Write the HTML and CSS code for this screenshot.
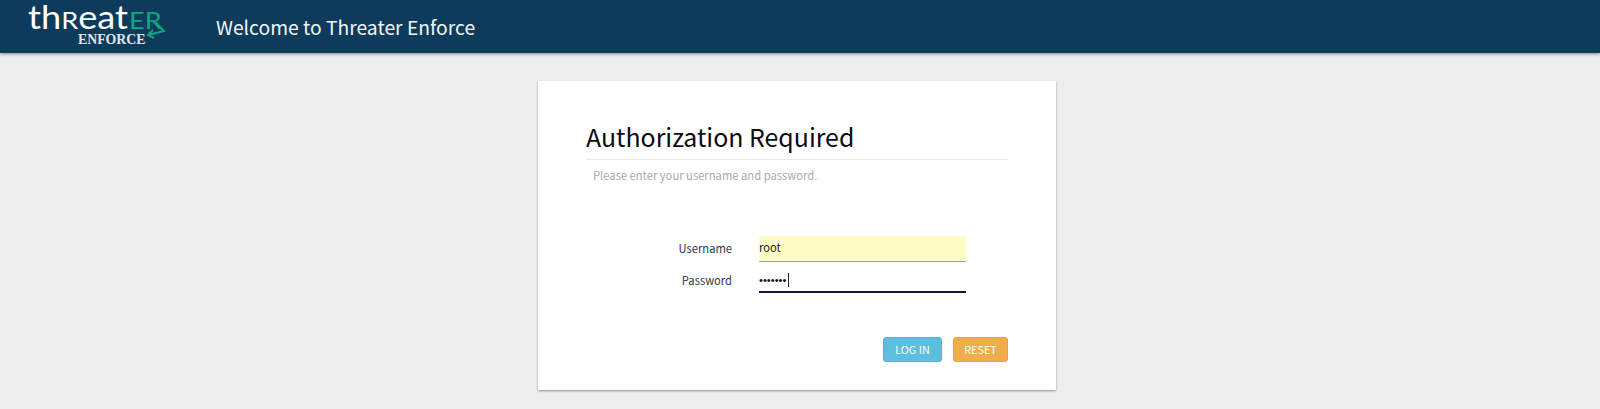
FILE: index.html
```html
<!DOCTYPE html>
<html lang="en">
<head>
<meta charset="utf-8">
<title>Welcome to Threater Enforce</title>
<link rel="stylesheet" href="styles.css">
</head>
<body>
<header class="topbar">
  <div class="logo">
    <div class="logo-word"><span class="logo-white">th<span class="logo-r">R</span>eat</span><span class="logo-green">ER</span></div>
    <div class="logo-sub">ENFORCE</div>
    <svg class="logo-arrow" width="140" height="46" viewBox="0 0 140 46" aria-hidden="true">
      <path d="M127 21L136 30L120 34M125 29L120 34L126 37" fill="none" stroke="#10a583" stroke-width="2"/>
    </svg>
  </div>
  <h1 class="topbar-title">Welcome to Threater Enforce</h1>
</header>
<main class="page">
  <section class="card">
    <h2 class="card-title">Authorization Required</h2>
    <p class="card-sub">Please enter your username and password.</p>
    <form class="login-form">
      <div class="field">
        <label class="field-label">Username</label>
        <div class="field-input filled">root</div>
      </div>
      <div class="field">
        <label class="field-label">Password</label>
        <div class="field-input focused"><span class="dots">•••••••</span><span class="caret"></span></div>
      </div>
      <div class="actions">
        <button type="button" class="btn btn-login">LOG IN</button>
        <button type="button" class="btn btn-reset">RESET</button>
      </div>
    </form>
  </section>
</main>
</body>
</html>
```
FILE: styles.css
```css
* { box-sizing: border-box; }
html, body { margin: 0; height: 100%; }
body {
  background: #eeeeee;
  font-family: "Noto Sans CJK SC", "Noto Sans", sans-serif;
  overflow: hidden;
}
.topbar {
  height: 53px;
  background: #0d3b5c;
  box-shadow: 0 1px 3px rgba(0,0,0,.45);
  display: flex;
  align-items: center;
  padding-left: 28px;
}
.logo { position: relative; width: 140px; height: 46px; margin-top: 1px; align-self: flex-start; flex: none; }
.logo-word {
  font-family: "Lato", sans-serif;
  font-size: 32px;
  line-height: 32px;
  height: 32px;
  white-space: nowrap;
}
.logo-white {
  display: inline-block;
  color: #fff;
  font-weight: 400;
  transform: scaleX(1.13);
  transform-origin: left center;
}
.logo-r { font-size: 24px; font-weight: 400; }
.logo-green {
  display: inline-block;
  color: #10a583;
  font-size: 23px;
  font-weight: 400;
  margin-left: 13px;
  transform: scaleX(1.18);
  transform-origin: left center;
}
.logo-sub {
  position: absolute;
  left: 50px;
  top: 33px;
  font-family: "Liberation Serif", serif;
  font-weight: 700;
  font-size: 13.8px;
  line-height: 12px;
  color: #e6e6e6;
}
.logo-arrow { position: absolute; left: 0; top: 0; overflow: visible; }
.topbar-title {
  margin: 0 0 0 48px;
  font-size: 19.3px;
  line-height: 28px;
  font-weight: 400;
  color: #f2f5f7;
  white-space: nowrap;
}
.page { display: flex; justify-content: center; padding: 28px 6px 0 0; }
.card {
  width: 518px;
  height: 309px;
  background: #fff;
  box-shadow: 0 1px 2px rgba(0,0,0,.4);
  padding: 37px 48px 0;
}
.card-title {
  margin: 0;
  height: 42px;
  font-size: 24.9px;
  line-height: 36px;
  font-weight: 400;
  color: #0b0b14;
  border-bottom: 1px solid #e8e8e8;
}
.card-sub {
  margin: 7px 0 0 7px;
  font-size: 11.22px;
  line-height: 17px;
  color: #aaaaaa;
}
.login-form { margin-top: 52px; }
.field { display: flex; align-items: stretch; margin-bottom: 6px; }
.field-label {
  width: 146px;
  margin-right: 27px;
  text-align: right;
  font-size: 11.2px;
  line-height: 24px;
  color: #2a3a48;
}
.field-input {
  width: 207px;
  height: 26px;
  font-size: 11.2px;
  line-height: 22px;
  color: #222;
  border-bottom: 1px solid #999;
  display: flex;
  align-items: center;
}
.field-input.filled { background: #fffdc6; border-bottom-color: #a5a57a; padding-bottom: 3px; }
.field-input.focused { border-bottom: 2px solid #14144a; height: 25px; }
.dots { font-family: "Liberation Sans", sans-serif; font-size: 11.2px; line-height: 12px; color: #111; }
.caret { width: 1px; height: 14px; background: #222; margin-left: 2px; }
.actions { display: flex; justify-content: flex-end; gap: 11px; margin-top: 44px; }
.btn {
  height: 25px;
  border-radius: 3px;
  color: #fff;
  font-family: inherit;
  font-size: 10.8px;
  line-height: 23px;
  padding: 0;
}
.btn-login { width: 59px; background: #5bc0de; border: 1px solid #46b8da; }
.btn-reset { width: 55px; background: #f0ad4e; border: 1px solid #eea236; }
```
